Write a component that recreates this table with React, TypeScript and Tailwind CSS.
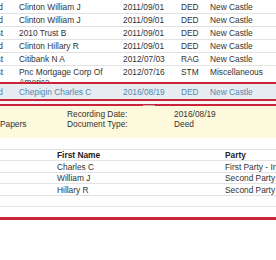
const docs = [
  { role: "Second", name: "Clinton William J", date: "2011/09/01", type: "DED", place: "New Castle" },
  { role: "Second", name: "Clinton William J", date: "2011/09/01", type: "DED", place: "New Castle" },
  { role: "First", name: "2010 Trust B", date: "2011/09/01", type: "DED", place: "New Castle" },
  { role: "Second", name: "Clinton Hillary R", date: "2011/09/01", type: "DED", place: "New Castle" },
  { role: "First", name: "Citibank N A", date: "2012/07/03", type: "RAG", place: "New Castle" },
]

const parties = [
  { first: "Charles C", party: "First Party - Indexed", h: "h-[12px]" },
  { first: "William J", party: "Second Party", h: "h-[11px]" },
  { first: "Hillary R", party: "Second Party", h: "h-[12px]" },
]

function DocRow({ role, name, date, type, place }: (typeof docs)[number]) {
  return (
    <div className="flex items-center h-[13px] border-b border-[#e2e2e2] whitespace-nowrap">
      <div className="w-[19px] shrink-0 overflow-hidden flex justify-end pr-[16px]">{role}</div>
      <div className="w-[104px] shrink-0">{name}</div>
      <div className="w-[58px] shrink-0">{date}</div>
      <div className="w-[29px] shrink-0">{type}</div>
      <div>{place}</div>
    </div>
  )
}

export default function App() {
  return (
    <div
      className="w-[276px] h-[260px] overflow-hidden bg-white text-[#333] text-[8.35px] leading-[10px]"
      style={{ fontFamily: '"Liberation Sans", Arial, sans-serif' }}
    >
      {/* search results */}
      <div className="h-[82px] overflow-hidden pt-[1px]">
        {docs.map((d, i) => (
          <DocRow key={i} {...d} />
        ))}
        <div className="flex items-start pt-[1px] whitespace-nowrap">
          <div className="w-[19px] shrink-0 overflow-hidden flex justify-end pr-[16px]">First</div>
          <div className="w-[104px] shrink-0 whitespace-normal pr-[6px]">Pnc Mortgage Corp Of America</div>
          <div className="w-[58px] shrink-0">2012/07/16</div>
          <div className="w-[29px] shrink-0">STM</div>
          <div>Miscellaneous</div>
        </div>
      </div>
      <div className="flex items-center h-[19px] border-y-2 border-[#c8243a] bg-[#e7ecf1] text-[#5688b0] whitespace-nowrap">
        <div className="w-[19px] shrink-0 overflow-hidden flex justify-end pr-[16px]">Second</div>
        <div className="w-[104px] shrink-0">Chepigin Charles C</div>
        <div className="w-[58px] shrink-0">2016/08/19</div>
        <div className="w-[29px] shrink-0">DED</div>
        <div>New Castle</div>
      </div>
      <div className="h-[3px] bg-[#f6f6f6]" />

      {/* splitter */}
      <div className="h-[2px] bg-[#c8243a] flex justify-center">
        <div className="ml-[22px] w-[12px] h-[1px] mt-[0.5px] bg-[#c9a9ad]" />
      </div>

      {/* document details */}
      <div className="h-[32px] bg-[#fdf9dc] pt-[3px] flex whitespace-nowrap">
        <div className="w-[67px] shrink-0 pt-[10px]">Papers</div>
        <div className="w-[107px] shrink-0 flex flex-col">
          <span>Recording Date:</span>
          <span>Document Type:</span>
        </div>
        <div className="flex flex-col">
          <span>2016/08/19</span>
          <span>Deed</span>
        </div>
      </div>

      {/* parties */}
      <div className="mt-[11px] whitespace-nowrap">
        <div className="flex items-center h-[12px] border-y border-[#e2e2e2] font-bold text-[#222]">
          <div className="w-[57px] shrink-0" />
          <div className="w-[168px] shrink-0">First Name</div>
          <div>Party</div>
        </div>
        {parties.map((p) => (
          <div key={p.first} className={`flex items-center ${p.h} border-b border-[#e2e2e2]`}>
            <div className="w-[57px] shrink-0" />
            <div className="w-[168px] shrink-0">{p.first}</div>
            <div>{p.party}</div>
          </div>
        ))}
        <div className="h-[11px] border-b border-[#e2e2e2]" />
      </div>
      <div className="mt-[10px] h-[3px] bg-[#c8243a]" />
      <div className="h-[40px]" />
      <div className="h-[1px] bg-[#f3f1c8]" />
    </div>
  )
}
